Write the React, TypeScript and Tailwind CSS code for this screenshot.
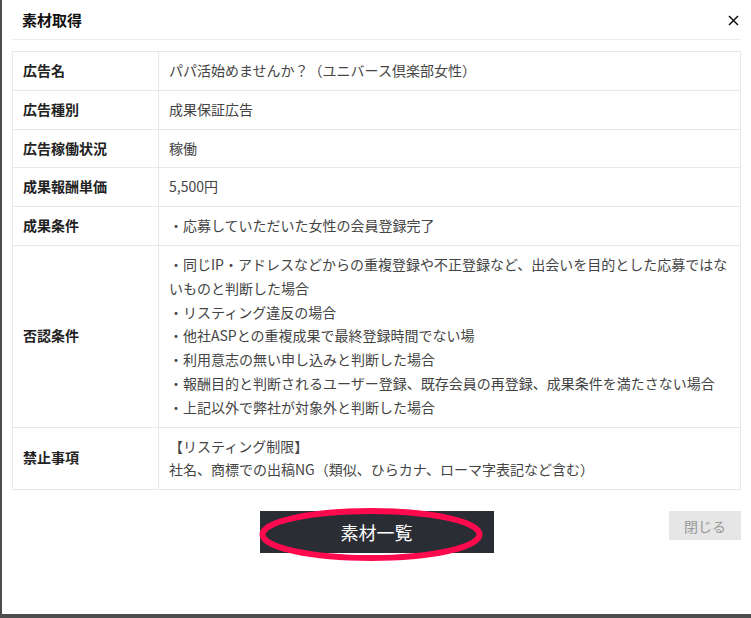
import React from 'react';

const rows: {label: string; lines: string[]}[] = [
    {label: '広告名', lines: ['パパ活始めませんか？（ユニバース倶楽部女性）']},
    {label: '広告種別', lines: ['成果保証広告']},
    {label: '広告稼働状況', lines: ['稼働']},
    {label: '成果報酬単価', lines: ['5,500円']},
    {label: '成果条件', lines: ['・応募していただいた女性の会員登録完了']},
    {
        label: '否認条件',
        lines: [
            '・同じIP・アドレスなどからの重複登録や不正登録など、出会いを目的とした応募ではな',
            'いものと判断した場合',
            '・リスティング違反の場合',
            '・他社ASPとの重複成果で最終登録時間でない場',
            '・利用意志の無い申し込みと判断した場合',
            '・報酬目的と判断されるユーザー登録、既存会員の再登録、成果条件を満たさない場合',
            '・上記以外で弊社が対象外と判断した場合',
        ],
    },
    {
        label: '禁止事項',
        lines: ['【リスティング制限】', '社名、商標での出稿NG（類似、ひらカナ、ローマ字表記など含む）'],
    },
];

const App = () => {
    return (
        <div
            className="w-[751px] h-[618px] bg-[#4d4d4d] overflow-hidden"
            style={{fontFamily: '"Noto Sans CJK JP", "Noto Sans", sans-serif'}}
        >
            <div className="ml-[2px] h-[614px] bg-white px-[10px]">
                {/* Header */}
                <div className="flex items-center justify-between h-[40px] border-b border-[#ececec] pl-[10px] pr-[2px]">
                    <h2 className="text-[15px] font-bold text-[#111] leading-none">素材取得</h2>
                    <svg width="11" height="11" viewBox="0 0 11 11" className="mt-[1px]">
                        <path d="M1 1 L10 10 M10 1 L1 10" stroke="#111" strokeWidth="1.5"/>
                    </svg>
                </div>

                {/* Detail table */}
                <table className="mt-[11px] w-full border-collapse border border-[#e8e8e8] text-[14px]">
                    <tbody>
                        {rows.map((row) => (
                            <tr key={row.label} className="border-b border-[#e8e8e8]">
                                <td className="w-[146px] border-r border-[#e8e8e8] px-[10px] py-[7px] font-bold text-[#222] leading-[23.8px] align-middle">
                                    {row.label}
                                </td>
                                <td className="px-[10px] py-[7px] text-[#444] leading-[23.8px] align-middle">
                                    {row.lines.map((line, i) => (
                                        <div key={i} className="whitespace-nowrap">{line}</div>
                                    ))}
                                </td>
                            </tr>
                        ))}
                    </tbody>
                </table>

                {/* Footer buttons */}
                <div className="grid grid-cols-[1fr_auto_1fr] items-start mt-[21px]">
                    <div/>
                    <div className="relative">
                        <button className="w-[234px] h-[42px] bg-[#2a2d34] text-white text-[18px] leading-none">
                            素材一覧
                        </button>
                        <svg
                            className="absolute left-[-1px] top-[-4px] pointer-events-none"
                            width="226"
                            height="56"
                            viewBox="0 0 226 56"
                        >
                            <ellipse cx="112" cy="27.5" rx="108.5" ry="23.5" fill="none" stroke="#ff0a4e" strokeWidth="6"/>
                        </svg>
                    </div>
                    <div className="flex justify-end">
                        <button className="w-[72px] h-[29px] bg-[#e6e6e6] text-[#9a9a9a] text-[14px] leading-none">
                            閉じる
                        </button>
                    </div>
                </div>
            </div>
        </div>
    );
};

export default App;
